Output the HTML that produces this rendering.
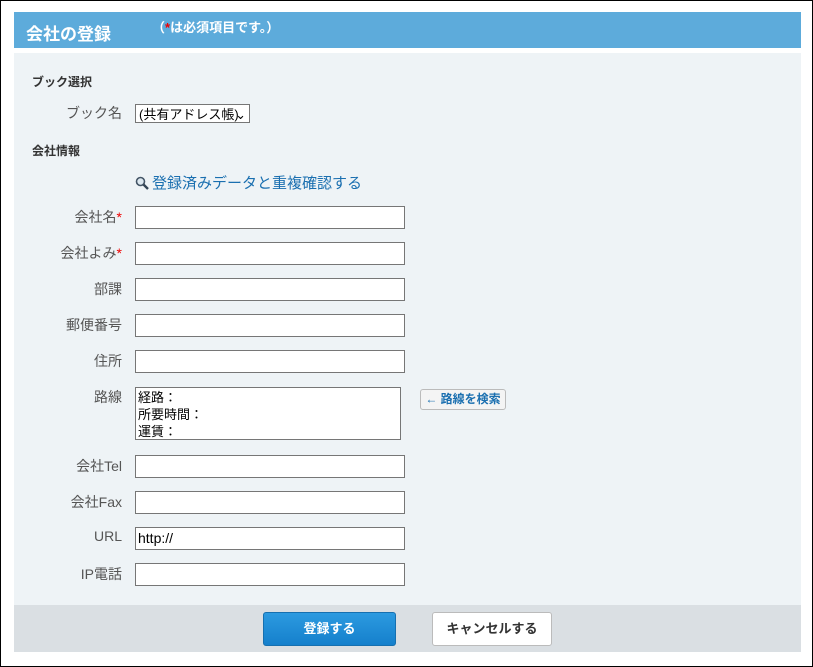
<!DOCTYPE html>
<html><head><meta charset="utf-8"><style>
body{margin:0;width:813px;height:667px;position:relative;background:#fff;font-family:"Liberation Sans","Noto Sans CJK JP",sans-serif;overflow:hidden}
.frame{position:absolute;left:0;top:0;width:811px;height:665px;border:1px solid #000}
.hdr{position:absolute;left:14px;top:12px;width:787px;height:36px;background:#5dabdb;color:#fff;font-weight:bold}
.body{position:absolute;left:14px;top:53px;width:787px;height:552px;background:#eef3f6}
.foot{position:absolute;left:14px;top:605px;width:787px;height:47px;background:#dadfe3}
.a{position:absolute;white-space:nowrap}
.lbl{position:absolute;right:691px;font-size:14px;color:#555;text-align:right;white-space:nowrap}
.in{position:absolute;left:135px;width:268px;height:21px;border:1px solid #767676;background:#fff;font-size:14px;line-height:21px;padding-left:2px;box-sizing:border-box;width:270px;height:23px}
.r{color:#e00}
</style></head><body>
<div class="frame"></div>
<div class="hdr"><span class="a" style="left:12px;top:8px;font-size:17px">会社の登録</span><span class="a" style="left:138px;top:5px;font-size:13px">（<span class="r">*</span>は必須項目です。）</span></div>
<div class="body"></div>
<div class="foot"></div>
<div class="a" style="left:32px;top:73px;font-size:12px;font-weight:bold;color:#333">ブック選択</div>
<div class="lbl" style="top:103px">ブック名</div>
<div class="a" style="left:135px;top:104px;width:115px;height:19px;border:1px solid #767676;background:#fff;font-size:13px;line-height:19px;box-sizing:border-box;padding-left:3px">(共有アドレス帳) <span style="position:absolute;right:3px;top:0">&#8964;</span></div>
<div class="a" style="left:32px;top:142px;font-size:12px;font-weight:bold;color:#333">会社情報</div>
<svg class="a" style="left:135px;top:176px" width="14" height="14" viewBox="0 0 14 14"><circle cx="5.5" cy="5.5" r="4" fill="#dde8f0" stroke="#456" stroke-width="1.6"/><path d="M8.5 8.5L13 13" stroke="#345" stroke-width="2.4"/></svg>
<div class="a" style="left:152px;top:172px;font-size:15px;color:#1a6fb0">登録済みデータと重複確認する</div>
<div class="lbl" style="top:207px">会社名<span class="r">*</span></div><div class="in" style="top:206px"></div>
<div class="lbl" style="top:243px">会社よみ<span class="r">*</span></div><div class="in" style="top:242px"></div>
<div class="lbl" style="top:279px">部課</div><div class="in" style="top:278px"></div>
<div class="lbl" style="top:315px">郵便番号</div><div class="in" style="top:314px"></div>
<div class="lbl" style="top:351px">住所</div><div class="in" style="top:350px"></div>
<div class="lbl" style="top:387px">路線</div>
<div class="in" style="top:387px;width:266px;height:53px;line-height:17px;font-size:13px;padding-top:1px">経路：<br>所要時間：<br>運賃：</div>
<div class="a" style="left:420px;top:389px;width:86px;height:21px;border:1px solid #bbb;border-radius:3px;background:#f4f4f4;box-sizing:border-box;font-size:12px;font-weight:bold;color:#1a6fb0;line-height:19px;text-align:center">← 路線を検索</div>
<div class="lbl" style="top:456px">会社Tel</div><div class="in" style="top:455px"></div>
<div class="lbl" style="top:492px">会社Fax</div><div class="in" style="top:491px"></div>
<div class="lbl" style="top:528px">URL</div><div class="in" style="top:527px">http://</div>
<div class="lbl" style="top:564px">IP電話</div><div class="in" style="top:563px"></div>
<div class="a" style="left:263px;top:612px;width:133px;height:34px;background:linear-gradient(#2c9ae0,#1580cc);border:1px solid #1670b0;border-radius:3px;box-sizing:border-box;color:#fff;font-weight:bold;font-size:13px;text-align:center;line-height:32px">登録する</div>
<div class="a" style="left:432px;top:612px;width:120px;height:34px;background:#fff;border:1px solid #bbb;border-radius:3px;box-sizing:border-box;color:#333;font-weight:bold;font-size:13px;text-align:center;line-height:32px">キャンセルする</div>
</body></html>
